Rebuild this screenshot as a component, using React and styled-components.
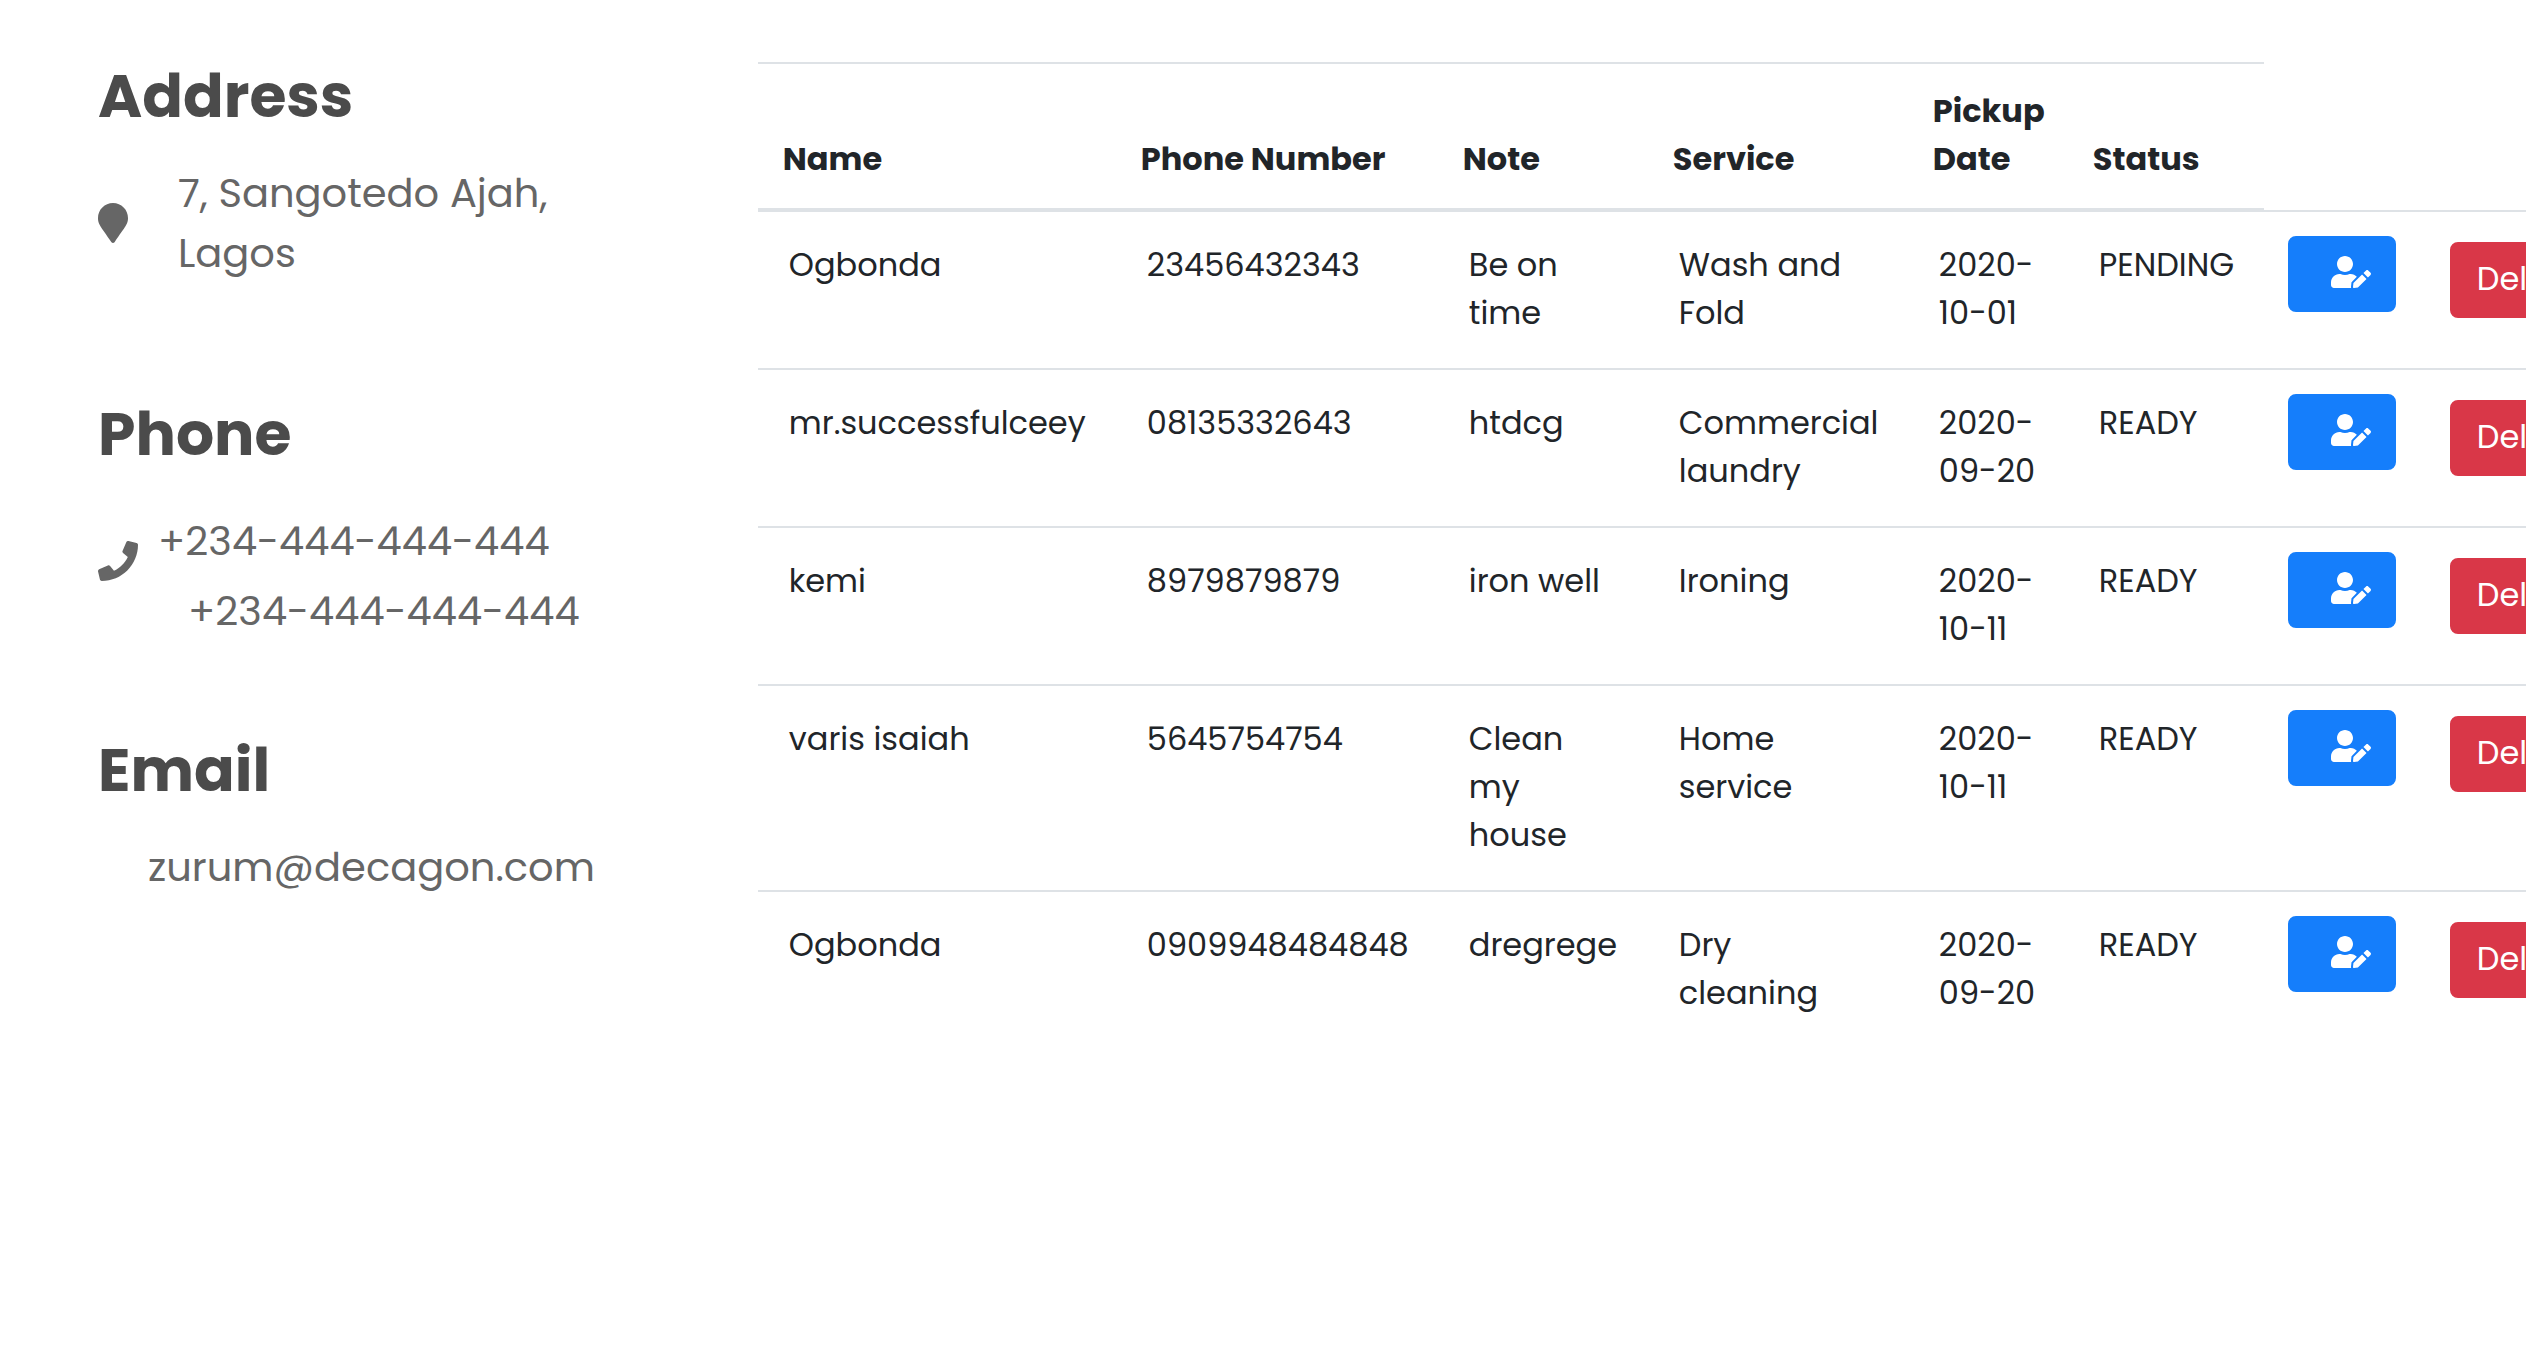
import React from "react";
import styled, { createGlobalStyle } from "styled-components";
import { FaMapMarker, FaPhone, FaUserEdit } from "react-icons/fa";

const GlobalStyle = createGlobalStyle`
  *, *::before, *::after { box-sizing: border-box; }
  body {
    margin: 0;
    background: #fff;
    color: #212529;
    font-family: Poppins, Inter, "Open Sans", sans-serif;
    overflow-x: hidden;
  }
`;

const Page = styled.div`
  display: grid;
  grid-template-columns: 30% minmax(0, 1fr);
  align-items: start;
`;

const Sidebar = styled.aside`
  display: flex;
  flex-direction: column;
  padding: 60px 98px;
  color: #666;
`;

const Section = styled.section`
  display: flex;
  flex-direction: column;
  gap: ${(p) => p.$gap}px;
  margin-bottom: ${(p) => p.$after || 0}px;
`;

const Heading = styled.h2`
  margin: 0;
  color: #4b4b4b;
  font-size: 60px;
  line-height: 72px;
  font-weight: 700;
`;

const ContactRow = styled.div`
  display: flex;
  align-items: ${(p) => p.$align || "center"};
  gap: ${(p) => p.$gap}px;
  font-size: 40px;
  line-height: 60px;

  svg {
    flex: none;
  }
`;

const PinIcon = styled(FaMapMarker)`
  width: 30px;
  height: 40px;
`;

const HandsetIcon = styled(FaPhone)`
  margin-top: 30px;
`;

const AddressText = styled.p`
  margin: 0;
`;

const PhoneList = styled.div`
  display: flex;
  flex-direction: column;
  gap: 10px;
`;

const ContactLink = styled.a`
  padding-left: ${(p) => p.$indent || 0}px;
  color: inherit;
  text-decoration: none;
  white-space: nowrap;
`;

const Orders = styled.main`
  padding-top: 62px;
  overflow: hidden;
`;

const Table = styled.table`
  width: 100%;
  table-layout: fixed;
  border-collapse: separate;
  border-spacing: 0;
  font-size: 32px;
  line-height: 48px;
`;

const Col = styled.col`
  width: ${(p) => (p.$width ? `${p.$width}px` : "auto")};
`;

const HeadCell = styled.th`
  padding: 23px 24px 25px 25px;
  border-top: 2px solid #dee2e6;
  border-bottom: 2px solid #dee2e6;
  font-weight: 700;
  text-align: left;
  vertical-align: bottom;
`;

const Cell = styled.td`
  padding: 24px;
  border-top: 2px solid #dee2e6;
  vertical-align: top;
`;

const CellText = styled.div`
  padding: 5px 6px 7px 7px;
`;

const Button = styled.button`
  display: flex;
  align-items: center;
  height: 76px;
  padding: 11px 25px 13px;
  border: 2px solid ${(p) => p.$color};
  border-radius: 8px;
  background: ${(p) => p.$color};
  color: #fff;
  font-family: inherit;
  font-size: 32px;
  line-height: 48px;
  white-space: nowrap;
  cursor: pointer;
`;

const EditButton = styled(Button)`
  width: 108px;
  padding: 10px 24px 14px 41px;

  svg {
    flex: none;
    width: 40px;
    height: 32px;
  }
`;

const DeleteButton = styled(Button)`
  margin: 6px;
`;

const columns = [
  { title: "Name", key: "name", width: 358 },
  { title: "Phone Number", key: "phone", width: 322 },
  { title: "Note", key: "note", width: 210 },
  { title: "Service", key: "service", width: 260 },
  { title: "Pickup Date", key: "date", width: 160 },
  { title: "Status", key: "status", width: 196 },
];

const orders = [
  { name: "Ogbonda", phone: "23456432343", note: "Be on time", service: "Wash and Fold", date: "2020-10-01", status: "PENDING" },
  { name: "mr.successfulceey", phone: "08135332643", note: "htdcg", service: "Commercial laundry", date: "2020-09-20", status: "READY" },
  { name: "kemi", phone: "8979879879", note: "iron well", service: "Ironing", date: "2020-10-11", status: "READY" },
  { name: "varis isaiah", phone: "5645754754", note: "Clean my house", service: "Home service", date: "2020-10-11", status: "READY" },
  { name: "Ogbonda", phone: "0909948484848", note: "dregrege", service: "Dry cleaning", date: "2020-09-20", status: "READY" },
];

function OrderRow({ order }) {
  return (
    <tr>
      {columns.map((c) => (
        <Cell key={c.key}>
          <CellText>{order[c.key]}</CellText>
        </Cell>
      ))}
      <Cell>
        <EditButton type="button" $color="#157efb" aria-label="Edit">
          <FaUserEdit />
        </EditButton>
      </Cell>
      <Cell>
        <DeleteButton type="button" $color="#d93748">Delete</DeleteButton>
      </Cell>
    </tr>
  );
}

export default function App() {
  return (
    <>
      <GlobalStyle />
      <Page>
        <Sidebar>
          <Section $gap={31} $after={115}>
            <Heading>Address</Heading>
            <ContactRow $gap={50}>
              <PinIcon />
              <AddressText>7, Sangotedo Ajah, Lagos</AddressText>
            </ContactRow>
          </Section>
          <Section $gap={41} $after={93}>
            <Heading>Phone</Heading>
            <ContactRow $gap={20} $align="flex-start">
              <HandsetIcon />
              <PhoneList>
                <ContactLink href="tel:+234444444444">+234-444-444-444</ContactLink>
                <ContactLink href="tel:+234444444444" $indent={30}>+234-444-444-444</ContactLink>
              </PhoneList>
            </ContactRow>
          </Section>
          <Section $gap={31}>
            <Heading>Email</Heading>
            <ContactRow $gap={0}>
              <ContactLink href="mailto:zurum@decagon.com" $indent={50}>zurum@decagon.com</ContactLink>
            </ContactRow>
          </Section>
        </Sidebar>
        <Orders>
          <Table>
            <colgroup>
              {columns.map((c) => <Col key={c.key} $width={c.width} />)}
              <Col $width={156} />
              <Col />
            </colgroup>
            <thead>
              <tr>
                {columns.map((c) => <HeadCell key={c.key} scope="col">{c.title}</HeadCell>)}
              </tr>
            </thead>
            <tbody>
              {orders.map((order, i) => <OrderRow key={i} order={order} />)}
            </tbody>
          </Table>
        </Orders>
      </Page>
    </>
  );
}
